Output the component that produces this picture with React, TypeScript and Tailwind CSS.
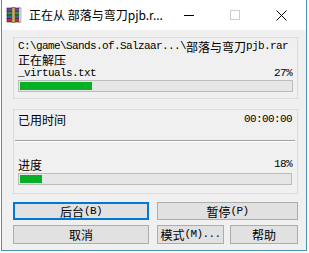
import React from "react";

const asc = "inline-block align-top font-['Liberation_Mono',monospace] text-[11px] tracking-[-0.6px] whitespace-pre leading-[13px] h-[13px]";
const cjk = "inline-block align-top font-['Noto_Sans_CJK_SC',sans-serif] text-[12px] leading-[13px] h-[13px]";

function M({ t }: { t: string }) {
  const parts = t.match(/[\x00-\x7F]+|[^\x00-\x7F]+/g) || [];
  return (
    <span className="inline-flex items-start h-[13px]">
      {parts.map((p, i) =>
        /^[\x00-\x7F]/.test(p) ? (
          <span key={i} className={asc}>{p}</span>
        ) : (
          <span key={i} className={cjk}>{p}</span>
        )
      )}
    </span>
  );
}

function Bar({ w }: { w: string }) {
  return (
    <div className="h-[12px] border border-[#bcbcbc] bg-[#e6e6e6] p-[1px] flex">
      <div className={`h-full bg-[#06b025] ${w}`} />
    </div>
  );
}

function Icon() {
  return (
    <svg width="16" height="16" viewBox="0 0 16 16">
      <rect x="1" y="1" width="13" height="3.5" fill="#7a3e9d" stroke="#2a1a3a" strokeWidth="0.6" />
      <rect x="1" y="4.5" width="13" height="3.5" fill="#2f9a3a" stroke="#173a1a" strokeWidth="0.6" />
      <rect x="1" y="8" width="13" height="3.5" fill="#2f5fc0" stroke="#1a2a4a" strokeWidth="0.6" />
      <rect x="1" y="11.5" width="13" height="3.5" fill="#c03030" stroke="#4a1a1a" strokeWidth="0.6" />
      <rect x="6" y="0.5" width="3" height="15" fill="#c8b070" stroke="#5a4a20" strokeWidth="0.5" />
      <rect x="13" y="1" width="2" height="14" fill="#e8e8e8" stroke="#555" strokeWidth="0.4" />
    </svg>
  );
}

export default function App() {
  const btn = "flex items-center justify-center bg-[#e1e1e1] text-black";
  return (
    <div className="w-[309px] h-[253px] bg-white overflow-hidden">
      <div className="ml-[1px] w-[306px] h-[251px] border-x border-b border-[#4f93ad] flex flex-col">
        <div className="h-[30px] bg-white flex items-center relative">
          <div className="ml-[4px]"><Icon /></div>
          <div className="ml-[7px] text-[12px] font-['Noto_Sans_CJK_SC',sans-serif] text-black leading-[14px] whitespace-pre">
            正在从 部落与弯刀pjb.r...
          </div>
          <div className="ml-auto flex items-center h-full">
            <div className="w-[46px] h-full flex items-center justify-center">
              <div className="w-[10px] h-[1px] bg-black" />
            </div>
            <div className="w-[46px] h-full flex items-center justify-center">
              <div className="w-[10px] h-[10px] border border-[#cccccc]" />
            </div>
            <div className="w-[46px] h-full flex items-center justify-center">
              <svg width="11" height="11" viewBox="0 0 11 11">
                <path d="M0.5 0.5 L10.5 10.5 M10.5 0.5 L0.5 10.5" stroke="#000" strokeWidth="1" />
              </svg>
            </div>
            <div className="w-[2px]" />
          </div>
        </div>
        <div className="flex-1 bg-[#f0f0f0] pl-[11px] pt-[7px] text-black">
          <div className="w-[285px] h-[62px] border border-[#dcdcdc] px-[4px] pt-[2px]">
            <div className="h-[13px] whitespace-nowrap flex"><M t="C:\game\Sands.of.Salzaar...\部落与弯刀pjb.rar" /></div>
            <div className="h-[13px] flex"><M t="正在解压" /></div>
            <div className="h-[13px] mt-[1px] flex justify-between pr-[1px]"><M t="_virtuals.txt" /><M t="27%" /></div>
            <div><Bar w="w-[72px]" /></div>
          </div>
          <div className="w-[285px] h-[85px] mt-[10px] border border-[#dcdcdc] pt-[3px]">
            <div className="h-[13px] flex justify-between px-[4px] pr-[5px]"><M t="已用时间" /><M t="00:00:00" /></div>
            <div className="h-[1px] bg-[#a0a0a0] mt-[14px] ml-[1px] mr-[2px]" />
            <div className="h-[1px] bg-white ml-[1px] mr-[2px]" />
            <div className="h-[13px] mt-[16px] flex justify-between px-[4px] pr-[5px]"><M t="进度" /><M t="18%" /></div>
            <div className="mt-[2px] px-[4px] pr-[5px]"><Bar w="w-[22px]" /></div>
          </div>
          <div className="w-[285px] mt-[8px] flex gap-[8px]">
            <div className={`${btn} w-[136px] h-[18px] border-2 border-[#0078d7]`}><M t="后台(B)" /></div>
            <div className={`${btn} w-[141px] h-[18px] border border-[#adadad]`}><M t="暂停(P)" /></div>
          </div>
          <div className="w-[285px] mt-[5px] flex">
            <div className={`${btn} w-[136px] h-[19px] border border-[#adadad]`}><M t="取消" /></div>
            <div className={`${btn} w-[67px] h-[19px] ml-[8px] border border-[#adadad]`}><M t="模式(M)..." /></div>
            <div className={`${btn} w-[68px] h-[19px] ml-[6px] border border-[#adadad]`}><M t="帮助" /></div>
          </div>
        </div>
      </div>
    </div>
  );
}
